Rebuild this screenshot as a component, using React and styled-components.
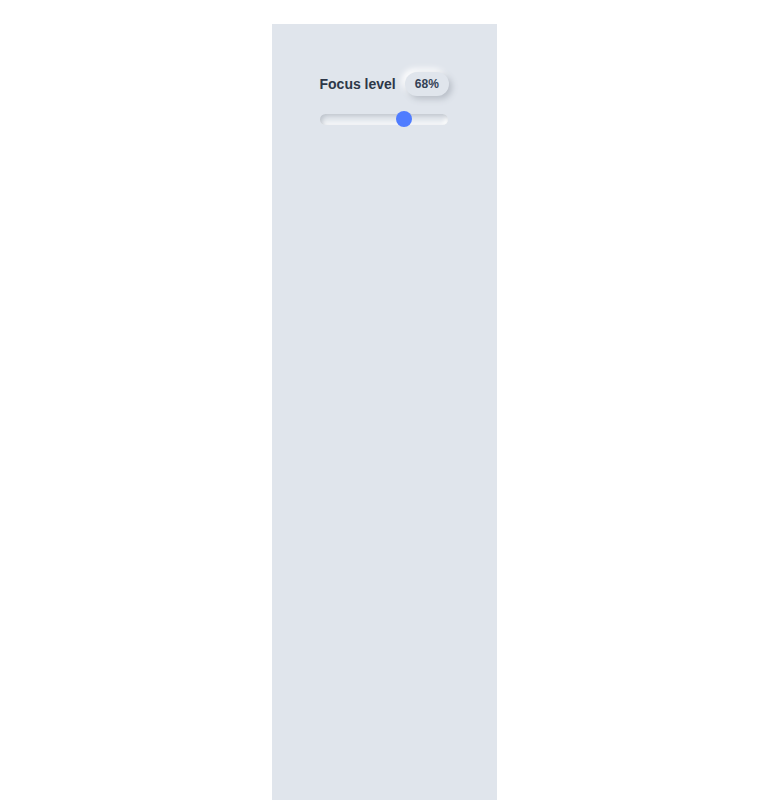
import React from "react";
import styled, { createGlobalStyle } from "styled-components";

const Global = createGlobalStyle`
  html, body { margin: 0; padding: 0; background: #ffffff; }
  body { font-family: "Liberation Sans", Arial, sans-serif; }
`;

const Page = styled.div`
  display: flex;
  justify-content: center;
  padding-top: 24px;
`;

const Panel = styled.div`
  width: 225px;
  min-height: 776px;
  background: #e0e5ec;
  box-sizing: border-box;
  padding: 48px;
  display: flex;
  flex-direction: column;
  gap: 15px;
`;

const Header = styled.div`
  display: flex;
  align-items: center;
  gap: 9px;
  height: 24px;
  white-space: nowrap;
`;

const Label = styled.span`
  flex-shrink: 0;
  font-size: 14px;
  font-weight: 700;
  color: #2d3748;
`;

const Badge = styled.span`
  flex-shrink: 0;
  font-size: 12px;
  font-weight: 700;
  color: #334155;
  padding: 5px 10px;
  border-radius: 12px;
  background: #e0e5ec;
  box-shadow: 3px 3px 6px #b8bec7, -3px -3px 6px #ffffff;
`;

const Slider = styled.div`
  position: relative;
  width: 128px;
  height: 16px;
  display: flex;
  align-items: center;
`;

const Track = styled.div`
  width: 100%;
  height: 11px;
  border-radius: 6px;
  background: #e4e8ee;
  box-shadow: inset 2px 2px 4px #bec4cc, inset -2px -2px 4px #ffffff;
`;

const Thumb = styled.div`
  position: absolute;
  top: 0;
  width: 16px;
  height: 16px;
  margin-left: -8px;
  border-radius: 50%;
  background: #4f7cff;
`;

export default function App() {
  const value = 68;
  const left = 8 + (value / 100) * 112;
  return (
    <>
      <Global />
      <Page>
        <Panel>
          <Header>
            <Label>Focus level</Label>
            <Badge>{value}%</Badge>
          </Header>
          <Slider>
            <Track />
            <Thumb style={{ left: `${left}px` }} />
          </Slider>
        </Panel>
      </Page>
    </>
  );
}
